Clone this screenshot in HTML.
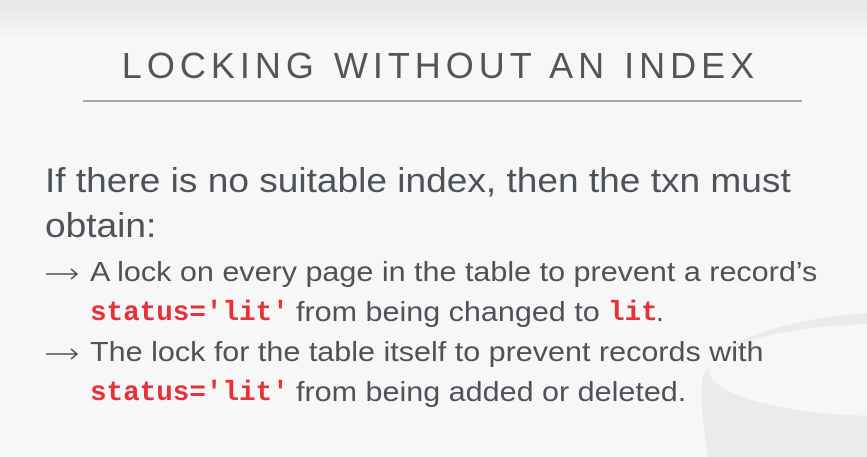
<!DOCTYPE html>
<html><head><meta charset="utf-8"><style>
body{margin:0;width:867px;height:457px;overflow:hidden;background:#f7f7f7;font-family:"Liberation Sans",sans-serif;color:#4d5359;position:relative}
.top{position:absolute;left:0;top:0;width:867px;height:40px;background:linear-gradient(#e6e6e6,#f7f7f7)}
.t{position:absolute;white-space:nowrap;transform-origin:0 0}
.r{position:absolute;white-space:nowrap;color:#e8303a;font-family:"Liberation Mono",monospace;font-weight:bold;font-size:27.6px}
</style></head><body>
<div class="top"></div>
<svg style="position:absolute;left:0;top:0" width="867" height="457">
<path d="M867 313 C790 318 712 340 702 380 C700 410 706 440 708 457 L867 457 Z" fill="#ebebeb"/>
<ellipse cx="885" cy="370" rx="176" ry="46" fill="#f7f7f7"/>
<path d="M46 274 H77 M71 269 L77 274 L71 279 M46 354 H77 M71 349 L77 354 L71 359" stroke="#4d5359" stroke-width="1.6" fill="none"/>
</svg>
<div class="t" style="left:7px;width:867px;text-align:center;top:45px;font-size:36px;letter-spacing:5px;color:#555">LOCKING WITHOUT AN INDEX</div>
<div style="position:absolute;left:83px;top:100px;width:719px;height:2px;background:#a6a6a6"></div>
<div class="t" style="left:45px;top:162px;font-size:34px;transform:scaleX(1.09)">If there is no suitable index, then the txn must</div>
<div class="t" style="left:45px;top:207px;font-size:34px;transform:scaleX(1.09)">obtain:</div>
<div class="t" style="left:90px;top:256px;font-size:28px;transform:scaleX(1.09)">A lock on every page in the table to prevent a record’s</div>
<div class="r" style="left:90px;top:298px">status='lit'</div>
<div class="t" style="left:296px;top:296px;font-size:28px;transform:scaleX(1.09)">from being changed to</div>
<div class="r" style="left:608px;top:298px">lit</div>
<div class="t" style="left:656px;top:296px;font-size:28px">.</div>
<div class="t" style="left:90px;top:336px;font-size:28px;transform:scaleX(1.09)">The lock for the table itself to prevent records with</div>
<div class="r" style="left:90px;top:378px">status='lit'</div>
<div class="t" style="left:296px;top:376px;font-size:28px;transform:scaleX(1.09)">from being added or deleted.</div>
</body></html>
